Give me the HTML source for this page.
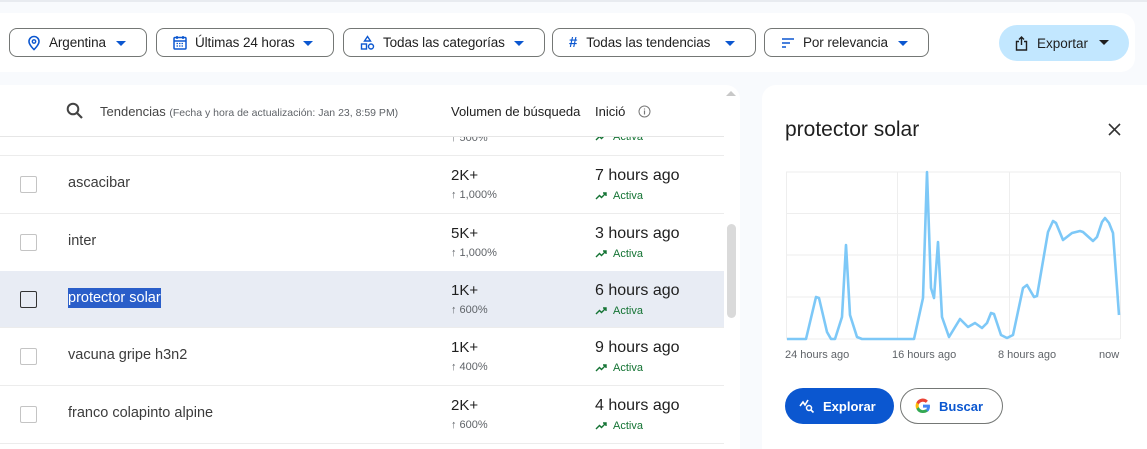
<!DOCTYPE html>
<html><head><meta charset="utf-8"><style>
*{box-sizing:border-box;margin:0;padding:0}
body{width:1147px;height:449px;overflow:hidden;background:#f8fafd;font-family:"Liberation Sans",sans-serif;color:#1f1f1f;position:relative}
.top{position:absolute;left:0;top:0;width:1147px;height:2px;background:#e8ebf0}
.bar{position:absolute;left:0;top:13px;width:1135px;height:59px;background:#fff;border-radius:0 14px 14px 0}
.chip{position:absolute;top:28px;height:29px;border:1px solid #747775;border-radius:8px;display:flex;align-items:center;font-size:13.5px;color:#1f1f1f;letter-spacing:-0.1px}
.chip svg{margin-right:8px}
.caret{width:0;height:0;border-left:5px solid transparent;border-right:5px solid transparent;border-top:5px solid #0b57d0;position:absolute;right:20px;top:12px}
.exp{position:absolute;left:999px;top:25px;width:130px;height:36px;border-radius:18px;background:#c2e7ff;font-size:13.5px;display:flex;align-items:center}
.table{position:absolute;left:0;top:85px;width:740px;height:364px;background:#fff;border-radius:0 14px 0 0;overflow:hidden}
.hdr{position:absolute;top:0;left:0;width:724px;height:52px;border-bottom:1px solid #e6e6e6;font-size:13px;color:#1f1f1f}
.row{position:absolute;left:0;width:724px;height:58px;border-bottom:1px solid #ececec}
.cb{position:absolute;left:20px;top:20px;width:17px;height:17px;border:1px solid #c4c4c4;border-radius:2px}
.name{position:absolute;left:68px;top:19px;font-size:14.5px;color:#3c3c3c}
.vol{position:absolute;left:451px;top:11px;font-size:15px;color:#1f1f1f}
.pct{position:absolute;left:451px;top:33px;font-size:11px;color:#5f6368}
.ago{position:absolute;left:595px;top:11px;font-size:16px;color:#1f1f1f}
.act{position:absolute;left:595px;top:34px;font-size:11px;color:#137333;display:flex;align-items:center}
.act svg{margin-right:5px}
.panel{position:absolute;left:762px;top:85px;width:385px;height:364px;background:#fff;border-radius:14px 0 0 0}
</style></head><body>
<div class="top"></div>
<div class="bar"></div>
<div class="chip" style="left:9px;width:138px"><svg style="margin-left:17px" width="14" height="16" viewBox="0 0 14 16"><path d="M7 1.5a5 5 0 0 0-5 5c0 3.5 5 8 5 8s5-4.5 5-8a5 5 0 0 0-5-5z" fill="none" stroke="#0b57d0" stroke-width="1.6"/><circle cx="7" cy="6.5" r="1.7" fill="none" stroke="#0b57d0" stroke-width="1.4"/></svg>Argentina<span class="caret"></span></div>
<div class="chip" style="left:156px;width:178px"><svg style="margin-left:16px" width="14" height="15" viewBox="0 0 14 15"><rect x="1" y="2.5" width="12" height="11.5" rx="1" fill="none" stroke="#0b57d0" stroke-width="1.5"/><path d="M1 6h12M4 1v3M10 1v3" stroke="#0b57d0" stroke-width="1.5"/><path d="M3.5 8.5h7M3.5 11h7" stroke="#0b57d0" stroke-width="1.2" stroke-dasharray="1.5 1"/></svg>Últimas 24 horas<span class="caret"></span></div>
<div class="chip" style="left:343px;width:202px"><svg style="margin-left:16px" width="15" height="15" viewBox="0 0 15 15"><path d="M7.5 1.5l3 4.5h-6z" fill="none" stroke="#0b57d0" stroke-width="1.4"/><rect x="1.5" y="9" width="5" height="5" fill="none" stroke="#0b57d0" stroke-width="1.4"/><circle cx="11" cy="11.5" r="2.5" fill="none" stroke="#0b57d0" stroke-width="1.4"/></svg>Todas las categorías<span class="caret"></span></div>
<div class="chip" style="left:552px;width:204px"><span style="margin-left:16px;margin-right:9px;color:#0b57d0;font-weight:bold;font-size:15px">#</span>Todas las tendencias<span class="caret"></span></div>
<div class="chip" style="left:764px;width:165px"><svg style="margin-left:16px" width="14" height="12" viewBox="0 0 14 12"><path d="M1 2h12M1 6h8M1 10h4" stroke="#0b57d0" stroke-width="1.6"/></svg>Por relevancia<span class="caret"></span></div>
<div class="exp"><svg style="margin-left:16px;margin-right:9px" width="13" height="15" viewBox="0 0 13 15"><path d="M4 5.5H1.5v8.5h10V5.5H9M6.5 9V1M4 3.5l2.5-2.5 2.5 2.5" fill="none" stroke="#1f1f1f" stroke-width="1.4"/></svg>Exportar<span class="caret" style="border-top-color:#1f1f1f;right:20px;top:15px"></span></div>

<div class="table">
 <div class="hdr">
  <svg style="position:absolute;left:66px;top:17px" width="17" height="17" viewBox="0 0 17 17"><circle cx="7" cy="7" r="5.3" fill="none" stroke="#444" stroke-width="2"/><path d="M11 11l5 5" stroke="#444" stroke-width="2.2"/></svg>
  <span style="position:absolute;left:100px;top:19px;color:#444">Tendencias <span style="font-size:10.5px;color:#5f6368">(Fecha y hora de actualización: Jan 23, 8:59 PM)</span></span>
  <span style="position:absolute;left:451px;top:19px;width:130px;overflow:hidden;white-space:nowrap">Volumen de búsqueda</span>
  <span style="position:absolute;left:595px;top:19px">Inició</span>
  <svg style="position:absolute;left:638px;top:20px" width="13" height="13" viewBox="0 0 13 13"><circle cx="6.5" cy="6.5" r="5.5" fill="none" stroke="#777" stroke-width="1"/><path d="M6.5 5.5v4M6.5 3.5v1" stroke="#777" stroke-width="1.2"/></svg>
 </div>
 <div class="row" style="top:52px;height:19px;overflow:hidden"><span class="pct" style="top:-5px">↑ 500%</span><span class="act" style="top:-6px"><svg width="13" height="8" viewBox="0 0 13 8"><path d="M1 7l3.5-3.5 2 2L11 1M8 1h3v3" fill="none" stroke="#137333" stroke-width="1.4"/></svg>Activa</span></div>
 <div class="row" style="top:71px"><div class="cb"></div><span class="name">ascacibar</span><span class="vol">2K+</span><span class="pct">↑ 1,000%</span><span class="ago">7 hours ago</span><span class="act"><svg width="13" height="8" viewBox="0 0 13 8"><path d="M1 7l3.5-3.5 2 2L11 1M8 1h3v3" fill="none" stroke="#137333" stroke-width="1.4"/></svg>Activa</span></div>
 <div class="row" style="top:129px"><div class="cb"></div><span class="name">inter</span><span class="vol">5K+</span><span class="pct">↑ 1,000%</span><span class="ago">3 hours ago</span><span class="act"><svg width="13" height="8" viewBox="0 0 13 8"><path d="M1 7l3.5-3.5 2 2L11 1M8 1h3v3" fill="none" stroke="#137333" stroke-width="1.4"/></svg>Activa</span></div>
 <div class="row" style="top:186px;height:57px;background:#e8ecf4"><div class="cb" style="border-color:#333;border-width:1.5px"></div><span class="name" style="background:#2a5ec9;color:#fff;top:17px;padding:2px 0">protector solar</span><span class="vol">1K+</span><span class="pct">↑ 600%</span><span class="ago">6 hours ago</span><span class="act"><svg width="13" height="8" viewBox="0 0 13 8"><path d="M1 7l3.5-3.5 2 2L11 1M8 1h3v3" fill="none" stroke="#137333" stroke-width="1.4"/></svg>Activa</span></div>
 <div class="row" style="top:243px"><div class="cb"></div><span class="name">vacuna gripe h3n2</span><span class="vol">1K+</span><span class="pct">↑ 400%</span><span class="ago">9 hours ago</span><span class="act"><svg width="13" height="8" viewBox="0 0 13 8"><path d="M1 7l3.5-3.5 2 2L11 1M8 1h3v3" fill="none" stroke="#137333" stroke-width="1.4"/></svg>Activa</span></div>
 <div class="row" style="top:301px"><div class="cb"></div><span class="name">franco colapinto alpine</span><span class="vol">2K+</span><span class="pct">↑ 600%</span><span class="ago">4 hours ago</span><span class="act"><svg width="13" height="8" viewBox="0 0 13 8"><path d="M1 7l3.5-3.5 2 2L11 1M8 1h3v3" fill="none" stroke="#137333" stroke-width="1.4"/></svg>Activa</span></div>
 <div style="position:absolute;left:726px;top:6px;width:0;height:0;border-left:5px solid transparent;border-right:5px solid transparent;border-bottom:5px solid #c8c8c8"></div>
 <div style="position:absolute;left:727px;top:139px;width:9px;height:94px;border-radius:5px;background:#dadada"></div>
</div>

<div class="panel">
 <div style="position:absolute;left:23px;top:33px;font-size:21px;color:#1f1f1f">protector solar</div>
 <svg style="position:absolute;left:346px;top:38px" width="13" height="13" viewBox="0 0 13 13"><path d="M1 1l11 11M12 1L1 12" stroke="#333" stroke-width="1.6"/></svg>
</div>
<svg style="position:absolute;left:0;top:0" width="1147" height="449">
 <g stroke="#eeeeee" stroke-width="1">
  <path d="M786 172H1120M786 213.5H1120M786 255H1120M786 297H1120M786 339H1120M786.5 172V339M897.5 172V339M1009.5 172V339M1120.5 172V339"/>
 </g>
 <polyline fill="none" stroke="#7dc8f7" stroke-width="2.6" stroke-linejoin="round" points="787,339 806,339 816,297 819,298 827,332 831,339 835,339 842,317 846,245 850,315 857,337 862,339 914,339 923,298 927,172 931,288 934,298 938,242 942,317 949,337 960,319 968,327 975,323 982,328 987,323 991,313 994,314 1001,335 1007,338 1013,335 1023,288 1027,285 1034,297 1037,296 1048,232 1053,221 1056,223 1063,240 1072,233 1080,231 1083,232 1093,241 1097,237 1102,222 1105,218 1109,223 1113,233 1119,315"/>
 <g font-family="Liberation Sans" font-size="11" fill="#5f6368">
  <text x="785" y="358">24 hours ago</text><text x="892" y="358">16 hours ago</text><text x="998" y="358">8 hours ago</text><text x="1099" y="358">now</text>
 </g>
</svg>
<div style="position:absolute;left:785px;top:388px;width:109px;height:36px;border-radius:18px;background:#0b57d0;color:#fff;font-size:13px;font-weight:bold;display:flex;align-items:center"><svg style="margin-left:14px;margin-right:8px" width="16" height="14" viewBox="0 0 16 14"><path d="M1 7l3-4 2 3 3-5" fill="none" stroke="#fff" stroke-width="1.6"/><circle cx="10" cy="9" r="2.5" fill="none" stroke="#fff" stroke-width="1.5"/><path d="M12 11l2.5 2.5" stroke="#fff" stroke-width="1.6"/></svg>Explorar</div>
<div style="position:absolute;left:900px;top:388px;width:103px;height:36px;border-radius:18px;border:1px solid #747775;background:#fff;color:#0b57d0;font-size:13px;font-weight:bold;display:flex;align-items:center"><svg style="margin-left:14px;margin-right:8px" width="16" height="16" viewBox="0 0 16 16"><path d="M15 8.2c0-.6-.1-1.1-.2-1.6H8v3h4a3.4 3.4 0 0 1-1.5 2.2v1.8h2.4c1.4-1.3 2.1-3.2 2.1-5.4z" fill="#4285f4"/><path d="M8 15c2 0 3.700-.7 4.900-1.800l-2.400-1.800c-.7.400-1.500.700-2.500.700-1.900 0-3.500-1.300-4.100-3H1.400v1.900A7 7 0 0 0 8 15z" fill="#34a853"/><path d="M3.900 9.100a4.200 4.200 0 0 1 0-2.700V4.500H1.400a7 7 0 0 0 0 6.400z" fill="#fbbc05"/><path d="M8 3.800c1.100 0 2 .4 2.800 1.100l2.100-2.100A7 7 0 0 0 1.400 4.500l2.500 1.900C4.500 4.900 6.100 3.800 8 3.800z" fill="#ea4335"/></svg>Buscar</div>
</body></html>
